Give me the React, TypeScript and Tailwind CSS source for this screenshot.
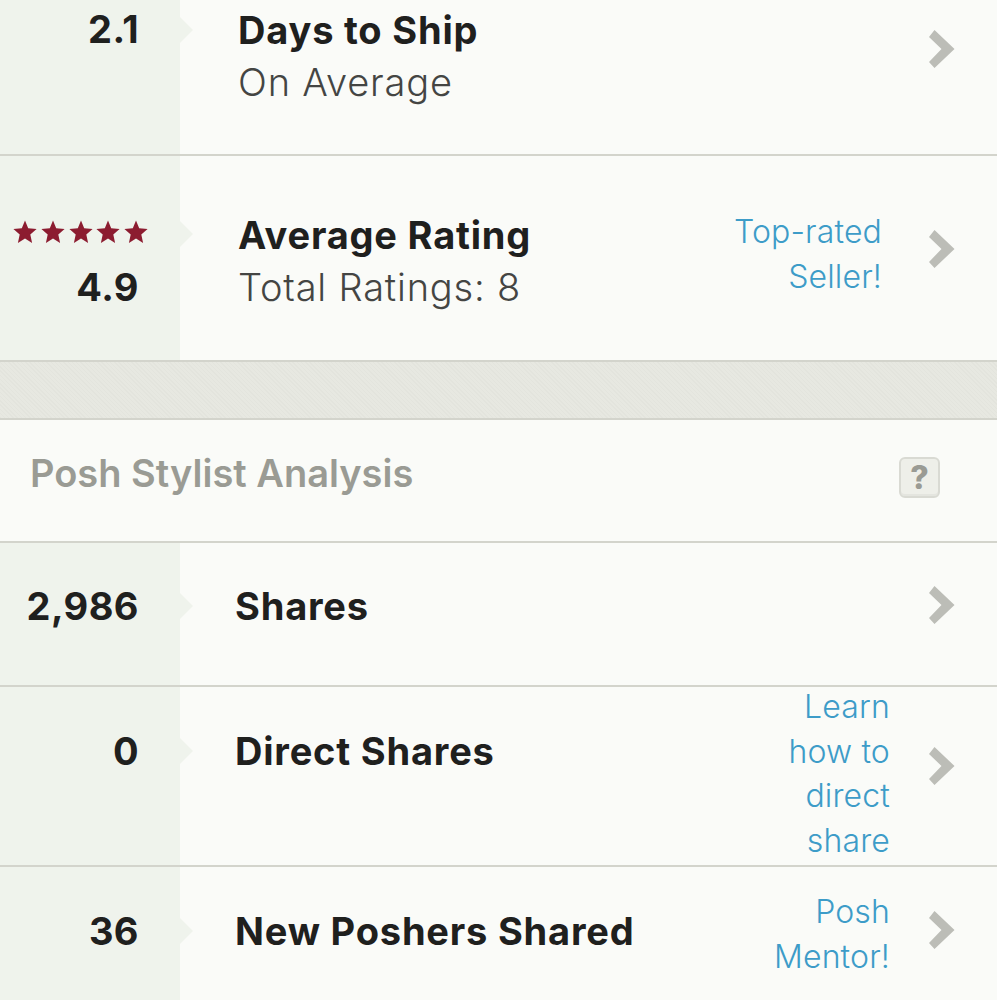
import type { ReactNode } from 'react';

function Chevron() {
  return (
    <svg width="26" height="38" viewBox="0 0 26 38" className="shrink-0">
      <path d="M0 7 L5.5 0 L25.5 19 L5.5 38 L0 32 L12.5 19 Z" fill="#bcbdb7" />
    </svg>
  );
}

function Star() {
  return (
    <svg width="24" height="24" viewBox="0 0 24 24">
      <path d="M12 .5 L15.2 8.2 L23.6 9 L17.3 14.6 L19.1 23 L12 18.6 L4.9 23 L6.7 14.6 L.4 9 L8.8 8.2 Z" fill="#8c1c30" />
    </svg>
  );
}

type RowProps = {
  left: ReactNode;
  title: string;
  sub?: string;
  note?: string[];
  height: string;
  titleClass: string;
  notchClass: string;
  noteClass?: string;
  chevClass: string;
};

function Row({ left, title, sub, note, height, titleClass, notchClass, noteClass, chevClass }: RowProps) {
  return (
    <div className={`flex ${height} border-b-2 border-[#d3d4cc]`}>
      <div className="relative w-[180px] shrink-0 bg-[#eff3ec] pr-[41px] flex flex-col items-end">
        {left}
        <div className={`absolute left-[180px] w-0 h-0 border-y-[13px] border-y-transparent border-l-[13px] border-l-[#eff3ec] ${notchClass}`} />
      </div>
      <div className={`flex-1 min-w-0 ${titleClass}`}>
        <div className="text-[38px] leading-[52px] font-bold tracking-[0.8px] text-[#1f201e]">{title}</div>
        {sub && <div className="text-[38px] leading-[53px] font-light tracking-[0.8px] text-[#444543]">{sub}</div>}
      </div>
      {note && (
        <div className={`text-right text-[#3d9cc8] text-[32px] leading-[44.5px] font-light tracking-[0.15px] ${noteClass ?? ''}`}>
          {note.map((n) => (
            <div key={n}>{n}</div>
          ))}
        </div>
      )}
      <div className={`w-[107px] shrink-0 pl-[39px] ${chevClass}`}>
        <Chevron />
      </div>
    </div>
  );
}

export default function App() {
  const num = 'text-[38px] leading-[52px] font-bold tracking-[0.45px] text-[#1f201e]';
  return (
    <div className="w-[997px] h-[1000px] overflow-hidden bg-[#fafbf8] font-['Inter',sans-serif]">
      <Row
        height="h-[156px]"
        left={<div className={`${num} pt-[3px] box-content`}>2.1</div>}
        title="Days to Ship"
        sub="On Average"
        titleClass="pl-[58px] pt-[4px]"
        notchClass="top-[17px]"
        chevClass="pt-[30px]"
      />
      <Row
        height="h-[206px]"
        left={
          <>
            <div className="flex pt-[64px] mr-[-9px] gap-[3.7px]">
              {[0, 1, 2, 3, 4].map((i) => (
                <Star key={i} />
              ))}
            </div>
            <div className={`${num} mt-[17px]`}>4.9</div>
          </>
        }
        title="Average Rating"
        sub="Total Ratings: 8"
        note={['Top-rated', 'Seller!']}
        titleClass="pl-[58px] pt-[53px]"
        noteClass="pt-[54px] mr-[8px]"
        notchClass="top-[65px]"
        chevClass="pt-[74px]"
      />
      <div className="h-[58px] border-b-2 border-[#d3d4cc] bg-[#e5e6df] bg-[repeating-linear-gradient(45deg,#e3e4dd_0px,#e3e4dd_1px,#e7e8e1_1px,#e7e8e1_3px)]" />
      <div className="h-[123px] flex items-center justify-between border-b-2 border-[#d3d4cc] pl-[30px] pr-[57px]">
        <div className="text-[38px] font-semibold text-[#9a9b94] pb-[14px]">Posh Stylist Analysis</div>
        <div className="w-[41px] h-[41px] mb-[6px] rounded-[6px] bg-[#eeefe9] border-2 border-[#d9dad3] flex items-center justify-center text-[32px] font-extrabold text-[#9a9b94] shadow-[inset_0_-2px_0_#e4e5df]">
          ?
        </div>
      </div>
      <Row
        height="h-[144px]"
        left={<div className={`${num} pt-[37px]`}>2,986</div>}
        title="Shares"
        titleClass="pl-[55px] pt-[37px]"
        notchClass="top-[50px]"
        chevClass="pt-[43px]"
      />
      <Row
        height="h-[180px]"
        left={<div className={`${num} pt-[38px]`}>0</div>}
        title="Direct Shares"
        note={['Learn', 'how to', 'direct', 'share']}
        titleClass="pl-[55px] pt-[38px]"
        noteClass="-mt-[2px]"
        notchClass="top-[51px]"
        chevClass="pt-[60px]"
      />
      <Row
        height="h-[135px]"
        left={<div className={`${num} pt-[38px]`}>36</div>}
        title="New Poshers Shared"
        note={['Posh', 'Mentor!']}
        titleClass="pl-[55px] pt-[38px]"
        noteClass="pt-[23px]"
        notchClass="top-[51px]"
        chevClass="pt-[44px]"
      />
    </div>
  );
}
